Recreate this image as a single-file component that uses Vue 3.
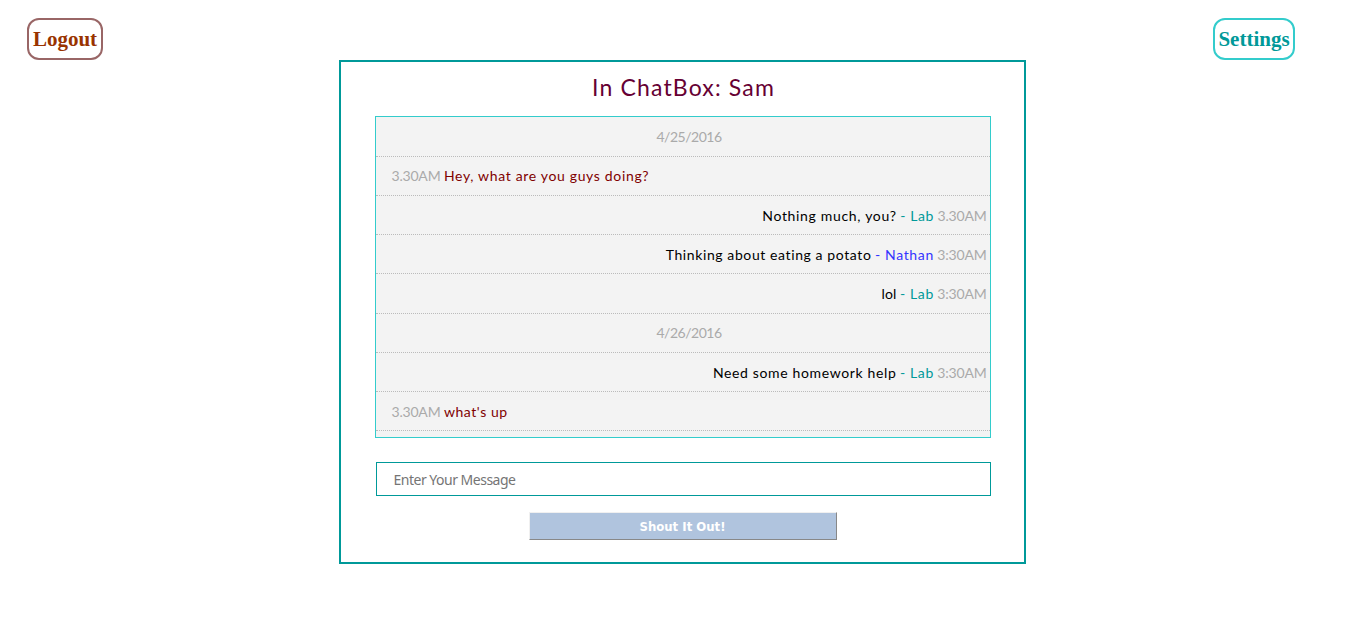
<script setup>
const rows = [
  { side: 'day', parts: [['time', '4/25/2016', -0.5]] },
  { side: 'left', parts: [['time', '3.30AM', -0.2], ['guest', 'Hey, what are you guys doing?', 0.66]] },
  { side: 'right', parts: [['text', 'Nothing much, you?', 0.68], ['lab', '- Lab', 0.6], ['time', '3.30AM', -0.2]] },
  { side: 'right', parts: [['text', 'Thinking about eating a potato', 0.6], ['nathan', '- Nathan', 0.65], ['time', '3:30AM', -0.2]] },
  { side: 'right', parts: [['text', 'lol', 0.2], ['lab', '- Lab', 0.6], ['time', '3:30AM', -0.2]] },
  { side: 'day', parts: [['time', '4/26/2016', -0.5]] },
  { side: 'right', parts: [['text', 'Need some homework help', 0.65], ['lab', '- Lab', 0.6], ['time', '3:30AM', -0.2]] },
  { side: 'left', parts: [['time', '3.30AM', -0.2], ['guest', "what's up", 0.55]] }
]
</script>

<template>
  <div class="page">
    <header>
      <a class="pill logout">Logout</a>
      <a class="pill settings">Settings</a>
    </header>
    <main>
      <h1>In ChatBox: Sam</h1>
      <ul>
        <li v-for="(row, i) in rows" :key="i" :class="row.side">
          <span v-for="(p, j) in row.parts" :key="j" :class="p[0]" :style="{ letterSpacing: p[2] + 'px' }">{{ p[1] }}</span>
        </li>
      </ul>
      <input type="text" placeholder="Enter Your Message">
      <button>Shout It Out!</button>
    </main>
  </div>
</template>

<style>
body { margin: 0; background: #fff; }
</style>

<style scoped>
.page { height: 619px; overflow: hidden; }
header { display: flex; justify-content: space-between; height: 42px; padding: 18px 71px 0 27px; }
.pill {
  box-sizing: border-box; height: 42px; border: 2px solid; border-radius: 12px;
  font: bold 21px/38px "Liberation Serif", serif; text-align: center;
}
.logout { width: 76px; color: #993300; border-color: #996666; }
.settings { width: 82px; color: #009999; border-color: #33cccc; }
main {
  box-sizing: border-box; width: 687px; height: 504px; margin-left: 339px;
  border: 2px solid #009999; display: flex; flex-direction: column; align-items: center;
}
h1 {
  margin: 0; height: 54px; color: #660033; white-space: nowrap;
  font: 400 23px/51px Papyrus, Lato, sans-serif; letter-spacing: 1.15px; text-indent: 2px;
}
ul {
  box-sizing: border-box; width: 616px; height: 322px; margin: 0; padding: 0.6px 0 0;
  list-style: none; background: #f3f3f3; border: 1px solid #33cccc; overflow: hidden;
}
li {
  box-sizing: border-box; height: 39.2px; padding: 0 3px 0 16px; border-bottom: 1px dotted #bbb;
  display: flex; gap: 3.5px; white-space: nowrap;
  font: 14px/39px "Century Gothic", Lato, sans-serif;
}
li:nth-child(-n+2), li:nth-child(6) { line-height: 37px; }
.day { justify-content: center; }
.right { justify-content: flex-end; }
.time { color: #aaa; }
.guest { color: #800000; }
.text { color: #000; }
.lab { color: #009999; }
.nathan { color: #3333ff; }
input {
  box-sizing: border-box; width: 615px; height: 34px; margin: 24px 0 0 1px; padding: 0 17px;
  border: 1px solid #009999; border-radius: 0; background: #fff; outline: 0;
  font: 14px "Noto Sans", sans-serif; letter-spacing: -0.5px;
}
input::placeholder { color: #757575; opacity: 1; }
button {
  box-sizing: border-box; width: 308px; height: 28px; margin-top: 16px; padding: 1px 0 0;
  background: #b0c4de; color: #fff; border: 1px solid; border-color: #f0f0f0 #888 #888 #f0f0f0;
  font: bold 13px "DejaVu Sans", sans-serif; font-stretch: condensed;
}
</style>
